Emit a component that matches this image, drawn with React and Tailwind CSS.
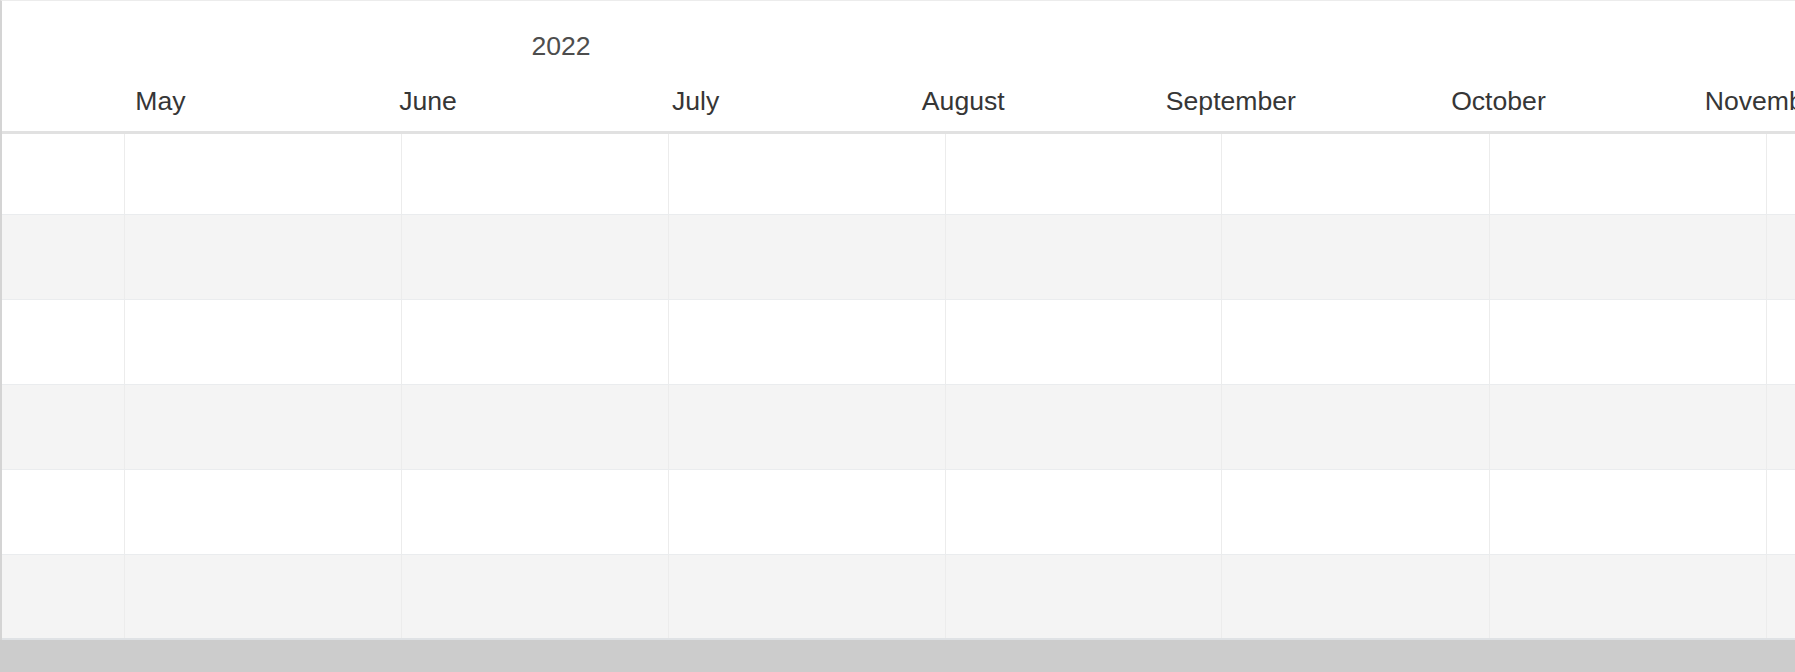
const MONTHS = [
  { name: "May", days: 31 },
  { name: "June", days: 30 },
  { name: "July", days: 31 },
  { name: "August", days: 31 },
  { name: "September", days: 30 },
  { name: "October", days: 31 },
  { name: "November", days: 30 },
];

const DAY_WIDTH = 8.92;
const LEAD = 122.3;

// row heights include their bottom divider
const ROWS = [81, 85, 85, 85, 85, 83];

function GridRow({ height, shaded, last }) {
  return (
    <div
      className={`flex shrink-0 ${shaded ? "bg-[#f4f4f4]" : "bg-white"} ${
        last ? "" : "border-b border-[#eaecee]"
      }`}
      style={{ height }}
    >
      <div className="shrink-0" style={{ width: LEAD }} />
      {MONTHS.map((m) => (
        <div
          key={m.name}
          className="shrink-0 border-l border-[#ececec]"
          style={{ width: m.days * DAY_WIDTH }}
        />
      ))}
    </div>
  );
}

export default function App() {
  return (
    <div className="h-[672px] w-full overflow-hidden bg-[#cccccc] font-['Liberation_Sans',Arial,sans-serif]">
      <div className="flex h-[640px] flex-col border-t border-l-2 border-t-[#ececec] border-l-[#d4d4d4] bg-white">
        <div className="h-[130px] shrink-0 border-b-[3px] border-[#e1e1e1] box-content">
          <div className="mt-[30px] flex h-[30px] w-[1118px] items-center justify-center text-[26.6px] leading-[30px] text-[#4d4d4d]">
            2022
          </div>
          <div className="mt-[25px] flex h-[30px] pl-[24.7px] text-[26.6px] leading-[30px] text-[#363636]">
            {MONTHS.map((m) => (
              <div
                key={m.name}
                className="w-[267.6px] shrink-0 whitespace-nowrap text-center"
              >
                {m.name}
              </div>
            ))}
          </div>
        </div>
        <div className="flex flex-1 flex-col border-b-2 border-[#dfe2e5]">
          {ROWS.map((h, i) => (
            <GridRow
              key={i}
              height={h}
              shaded={i % 2 === 1}
              last={i === ROWS.length - 1}
            />
          ))}
        </div>
      </div>
    </div>
  );
}
